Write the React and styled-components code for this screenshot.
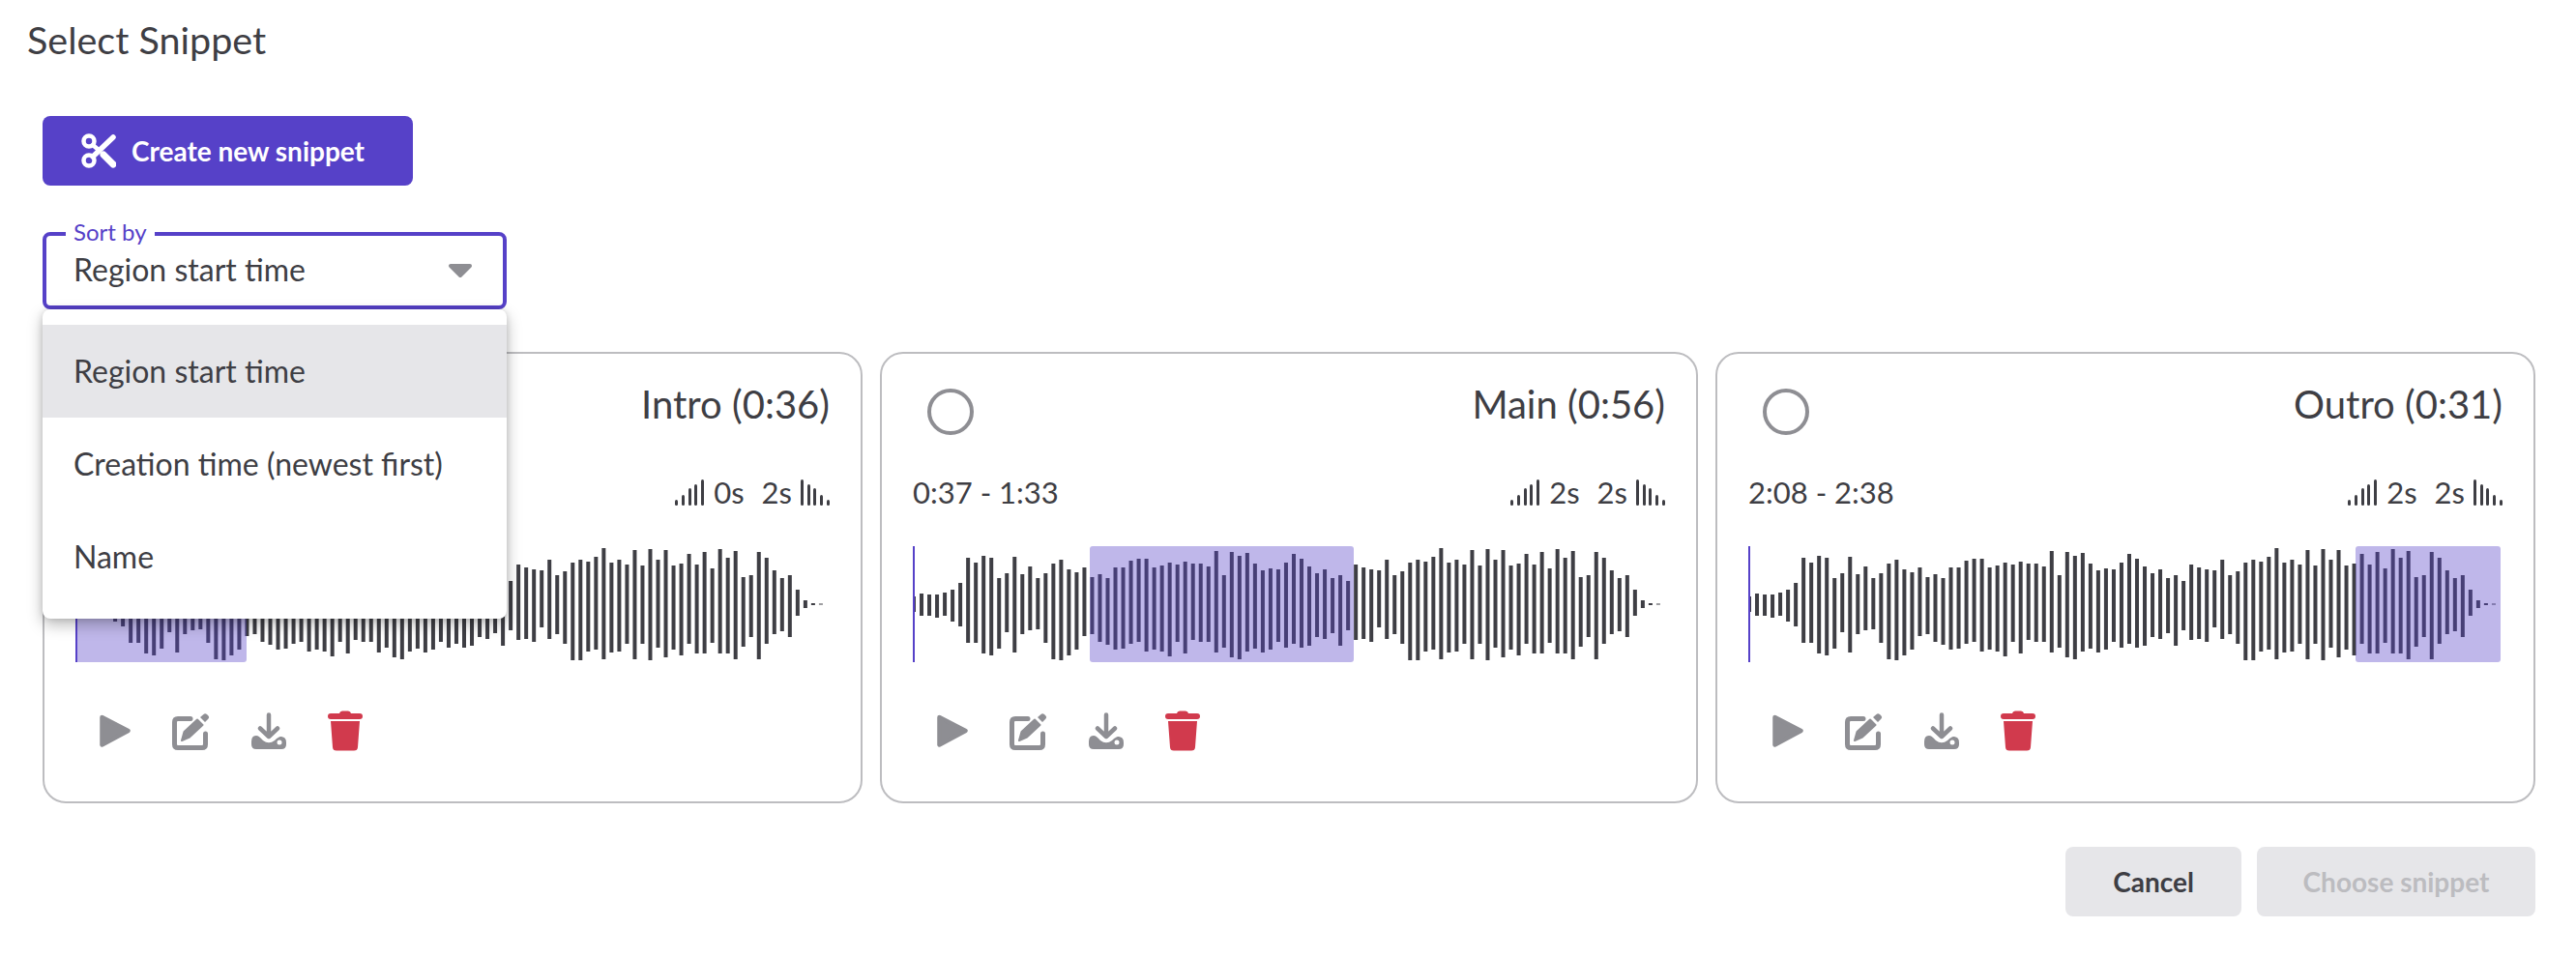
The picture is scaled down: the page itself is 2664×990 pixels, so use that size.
import styled, { createGlobalStyle } from "styled-components";

const GlobalStyle = createGlobalStyle`
  html, body {
    margin: 0;
    background: #fff;
    font-family: Lato, "Noto Sans", sans-serif;
    color: #3e3e44;
  }
  * { box-sizing: border-box; }
`;

const Page = styled.div`
  width: 2664px;
  height: 990px;
  background: #fff;
  overflow: hidden;
`;

const Title = styled.h1`
  margin: 0;
  padding: 18px 28px 0;
  font-size: 39.5px;
  line-height: 46px;
  font-weight: 400;
`;

const Content = styled.div`
  padding: 56px 42px 0 44px;
`;

const CreateButton = styled.button`
  display: flex;
  align-items: center;
  gap: 16px;
  width: 383px;
  height: 72px;
  padding: 0 0 0 40px;
  border: 0;
  border-radius: 8px;
  background: #5641c8;
  color: #fff;
  font-family: inherit;
  font-size: 28px;
  font-weight: 700;
`;

const SelectWrap = styled.div`
  position: relative;
  width: 480px;
  margin-top: 48px;
`;

const SelectBox = styled.div`
  display: flex;
  align-items: center;
  justify-content: space-between;
  height: 80px;
  padding: 0 31px 0 28px;
  border: 4px solid #5641c8;
  border-radius: 8px;
  font-size: 32px;
`;

const SelectValue = styled.span`
  line-height: 36px;
  margin-bottom: 2px;
`;

const SelectLabel = styled.span`
  position: absolute;
  left: 24px;
  top: -12px;
  padding: 0 8px;
  background: #fff;
  color: #5641c8;
  font-size: 24px;
  line-height: 24px;
`;

const Menu = styled.ul`
  position: absolute;
  z-index: 2;
  top: 80px;
  left: 0;
  width: 100%;
  margin: 0;
  padding: 16px 0;
  list-style: none;
  background: #fff;
  border-radius: 8px;
  box-shadow: 0 6px 16px rgba(0, 0, 0, 0.28), 0 0 6px rgba(0, 0, 0, 0.12);
`;

const MenuItem = styled.li`
  display: flex;
  align-items: center;
  height: 96px;
  padding: 0 0 2px 32px;
  font-size: 32px;
  background: ${(p) => (p.$active ? "#e6e6e9" : "transparent")};
`;

const Cards = styled.div`
  display: grid;
  grid-template-columns: 848px 846px 848px;
  gap: 18px;
  margin-top: 44px;
`;

const Card = styled.div`
  height: 467px;
  padding: 28px 32px 0;
  border: 2px solid #bdbdc0;
  border-radius: 24px;
`;

const CardHeader = styled.div`
  display: flex;
  align-items: flex-start;
  justify-content: space-between;
  height: 64px;
  padding-left: 15px;
`;

const Radio = styled.span`
  width: 48px;
  height: 48px;
  margin-top: 8px;
  border: 4px solid #8e8e93;
  border-radius: 50%;
`;

const CardName = styled.span`
  font-size: 40px;
  line-height: 48px;
`;

const InfoRow = styled.div`
  display: flex;
  align-items: center;
  justify-content: space-between;
  margin-top: 31px;
  height: 40px;
  font-size: 31px;
`;

const Fades = styled.div`
  display: flex;
  align-items: center;
`;

const FadeValue = styled.span`
  margin: 0 ${(p) => p.$gap || 0}px 0 ${(p) => p.$left || 0}px;
`;

const Wave = styled.svg`
  display: block;
  width: 778px;
  height: 120px;
  margin-top: 36px;
`;

const Actions = styled.div`
  display: flex;
  align-items: center;
  height: 42px;
  margin-top: 50px;
  padding-left: 25px;
`;

const ActionIcon = styled.svg`
  display: block;
  flex: none;
  margin-right: ${(p) => p.$gap}px;
`;

const Footer = styled.div`
  display: flex;
  justify-content: flex-end;
  gap: 16px;
  margin-top: 45px;
`;

const FooterButton = styled.button`
  width: ${(p) => p.$width}px;
  height: 72px;
  border: 0;
  border-radius: 8px;
  background: #e6e6e9;
  color: ${(p) => (p.disabled ? "#bcbcc0" : "#3e3e44")};
  font-family: inherit;
  font-size: 28px;
  font-weight: 700;
`;

// top / bottom of each bar, in px from the top of the wave
const BARS = [
  [52, 68], [49, 72], [50, 72], [50, 74], [48, 72], [45, 78], [38, 83], [12, 100], [17, 100], [10, 111],
  [12, 113], [33, 106], [28, 89], [11, 110], [29, 91], [21, 87], [33, 86], [28, 100], [18, 117], [14, 118],
  [24, 113], [27, 107], [22, 93], [32, 91], [29, 99], [33, 102], [22, 107], [22, 106], [15, 101], [13, 99],
  [13, 109], [22, 107], [20, 109], [17, 114], [19, 99], [16, 111], [18, 97], [18, 99], [21, 99], [5, 110],
  [30, 105], [6, 115], [10, 117], [7, 109], [18, 106], [25, 110], [23, 107], [24, 99], [17, 105], [8, 101],
  [13, 105], [21, 103], [28, 94], [24, 96], [33, 90], [30, 103], [36, 87], [19, 97], [22, 96], [24, 99],
  [25, 84], [14, 96], [30, 91], [26, 101], [17, 118], [14, 118], [16, 109], [11, 107], [2, 117], [17, 110],
  [14, 109], [19, 101], [4, 117], [20, 101], [3, 118], [14, 105], [4, 115], [20, 107], [18, 113], [8, 101],
  [19, 111], [6, 111], [23, 100], [3, 111], [12, 111], [5, 117], [32, 104], [30, 94], [6, 117], [12, 101],
  [25, 91], [33, 88], [30, 94], [45, 72], [56, 64], [59, 61], [59.5, 60.5],
];

const SNIPPETS = [
  { name: "Intro (0:36)", range: "0:00 - 0:36", fadeIn: "0s", fadeOut: "2s", start: 0, width: 177 },
  { name: "Main (0:56)", range: "0:37 - 1:33", fadeIn: "2s", fadeOut: "2s", start: 183, width: 273 },
  { name: "Outro (0:31)", range: "2:08 - 2:38", fadeIn: "2s", fadeOut: "2s", start: 628, width: 150 },
];

const Waveform = ({ start, width }) => (
  <Wave viewBox="0 0 778 120">
    {BARS.map(([top, bottom], i) => (
      <rect key={i} x={i * 8.02 - 1} y={top} width="4" height={bottom - top} fill="#3e3e44" />
    ))}
    <rect x={start} width={width} height="120" rx="3" fill="#5641c8" opacity="0.38" />
    <rect width="2" height="120" fill="#5641c8" />
  </Wave>
);

const FadeIcon = ({ out }) => (
  <svg width="30" height="27" viewBox="0 0 30 27" style={{ display: "block" }}>
    <g transform={out ? "matrix(-1 0 0 1 30 0)" : undefined} fill="#3e3e44">
      <rect x="0" y="21" width="3" height="6" rx="1.5" />
      <rect x="7" y="16" width="3" height="11" rx="1.5" />
      <rect x="14" y="9" width="3" height="18" rx="1.5" />
      <rect x="20" y="5" width="3" height="22" rx="1.5" />
      <rect x="27" y="0" width="3" height="27" rx="1.5" />
    </g>
  </svg>
);

const ScissorsIcon = () => (
  <svg width="36" height="36" viewBox="0 0 36 36">
    <g fill="none" stroke="#fff" strokeLinecap="round">
      <circle cx="8" cy="8" r="5.5" strokeWidth="4.5" />
      <circle cx="8" cy="28" r="5.5" strokeWidth="4.5" />
      <path d="M12 24 L33 4" strokeWidth="5.5" />
      <path d="M12 12 L19 18" strokeWidth="4.5" />
      <path d="M23 22 L33 32" strokeWidth="7" />
    </g>
  </svg>
);

const Caret = () => (
  <svg width="26" height="16" viewBox="0 0 26 16">
    <path d="M3 3 H23 L13 13 Z" fill="#8e8e93" stroke="#8e8e93" strokeWidth="4" strokeLinejoin="round" />
  </svg>
);

const PlayIcon = () => (
  <ActionIcon $gap={43} width="32" height="34" viewBox="0 0 32 34">
    <path d="M2.500 3 L29.500 17 L2.500 31.500 Z" fill="#8e8e93" stroke="#8e8e93" strokeWidth="4.500" strokeLinejoin="round" />
  </ActionIcon>
);

const EditIcon = () => (
  <ActionIcon $gap={43} width="39" height="40" viewBox="0 0 39 40">
    <path d="M19 7.500 H6 Q2.500 7.500 2.500 11 V34 Q2.500 37.500 6 37.500 H31 Q34.500 37.500 34.500 34 V23" fill="none" stroke="#8e8e93" strokeWidth="5" strokeLinecap="round" />
    <path d="M10 30 L12.500 21 L26 8.500 L31.500 14 L18 26.500 Z" fill="#8e8e93" stroke="#8e8e93" strokeWidth="2" strokeLinejoin="round" />
    <path d="M29 6 L32.500 3 Q34 1.500 36 3 L37.500 4.500 Q39 6 37.500 7.500 L34 11 Z" fill="#8e8e93" />
  </ActionIcon>
);

const DownloadIcon = () => (
  <ActionIcon $gap={43} width="36" height="38" viewBox="0 0 36 38">
    <path d="M18 2.500 V24 M9 16.500 L18 25 L27 16.500" fill="none" stroke="#8e8e93" strokeWidth="4.500" strokeLinecap="round" strokeLinejoin="round" />
    <path d="M5 24 C8 24 10 27 12 29 Q18 33.500 24 29 C27 26 29 25 31 25 Q36 25.500 36 31 V33 Q36 38 31 38 H5 Q0 38 0 33 V30 Q0 24 5 24 Z" fill="#8e8e93" />
    <circle cx="29" cy="31" r="2.500" fill="#fff" />
  </ActionIcon>
);

const TrashIcon = () => (
  <ActionIcon $gap={0} width="36" height="42" viewBox="0 0 36 42">
    <path d="M12 3 Q12.500 0.500 15 0.500 H21 Q23.500 0.500 24 3 H33 Q36 3 36 6 Q36 9 33 9 H3 Q0 9 0 6 Q0 3 3 3 Z" fill="#d13a4d" />
    <path d="M3 11 H33 L31 38 Q30.800 41.500 27 41.500 H9 Q5.200 41.500 5 38 Z" fill="#d13a4d" />
  </ActionIcon>
);

const SnippetCard = ({ snippet }) => (
  <Card>
    <CardHeader>
      <Radio />
      <CardName>{snippet.name}</CardName>
    </CardHeader>
    <InfoRow>
      <span>{snippet.range}</span>
      <Fades>
        <FadeIcon />
        <FadeValue $left={10} $gap={18}>{snippet.fadeIn}</FadeValue>
        <FadeValue $gap={9}>{snippet.fadeOut}</FadeValue>
        <FadeIcon out />
      </Fades>
    </InfoRow>
    <Waveform start={snippet.start} width={snippet.width} />
    <Actions>
      <PlayIcon />
      <EditIcon />
      <DownloadIcon />
      <TrashIcon />
    </Actions>
  </Card>
);

const App = () => (
  <Page>
    <GlobalStyle />
    <Title>Select Snippet</Title>
    <Content>
      <CreateButton>
        <ScissorsIcon />
        Create new snippet
      </CreateButton>
      <SelectWrap>
        <SelectLabel>Sort by</SelectLabel>
        <SelectBox>
          <SelectValue>Region start time</SelectValue>
          <Caret />
        </SelectBox>
        <Menu>
          <MenuItem $active>Region start time</MenuItem>
          <MenuItem>Creation time (newest first)</MenuItem>
          <MenuItem>Name</MenuItem>
        </Menu>
      </SelectWrap>
      <Cards>
        {SNIPPETS.map((snippet) => (
          <SnippetCard key={snippet.name} snippet={snippet} />
        ))}
      </Cards>
      <Footer>
        <FooterButton $width={182}>Cancel</FooterButton>
        <FooterButton $width={288} disabled>Choose snippet</FooterButton>
      </Footer>
    </Content>
  </Page>
);

export default App;
